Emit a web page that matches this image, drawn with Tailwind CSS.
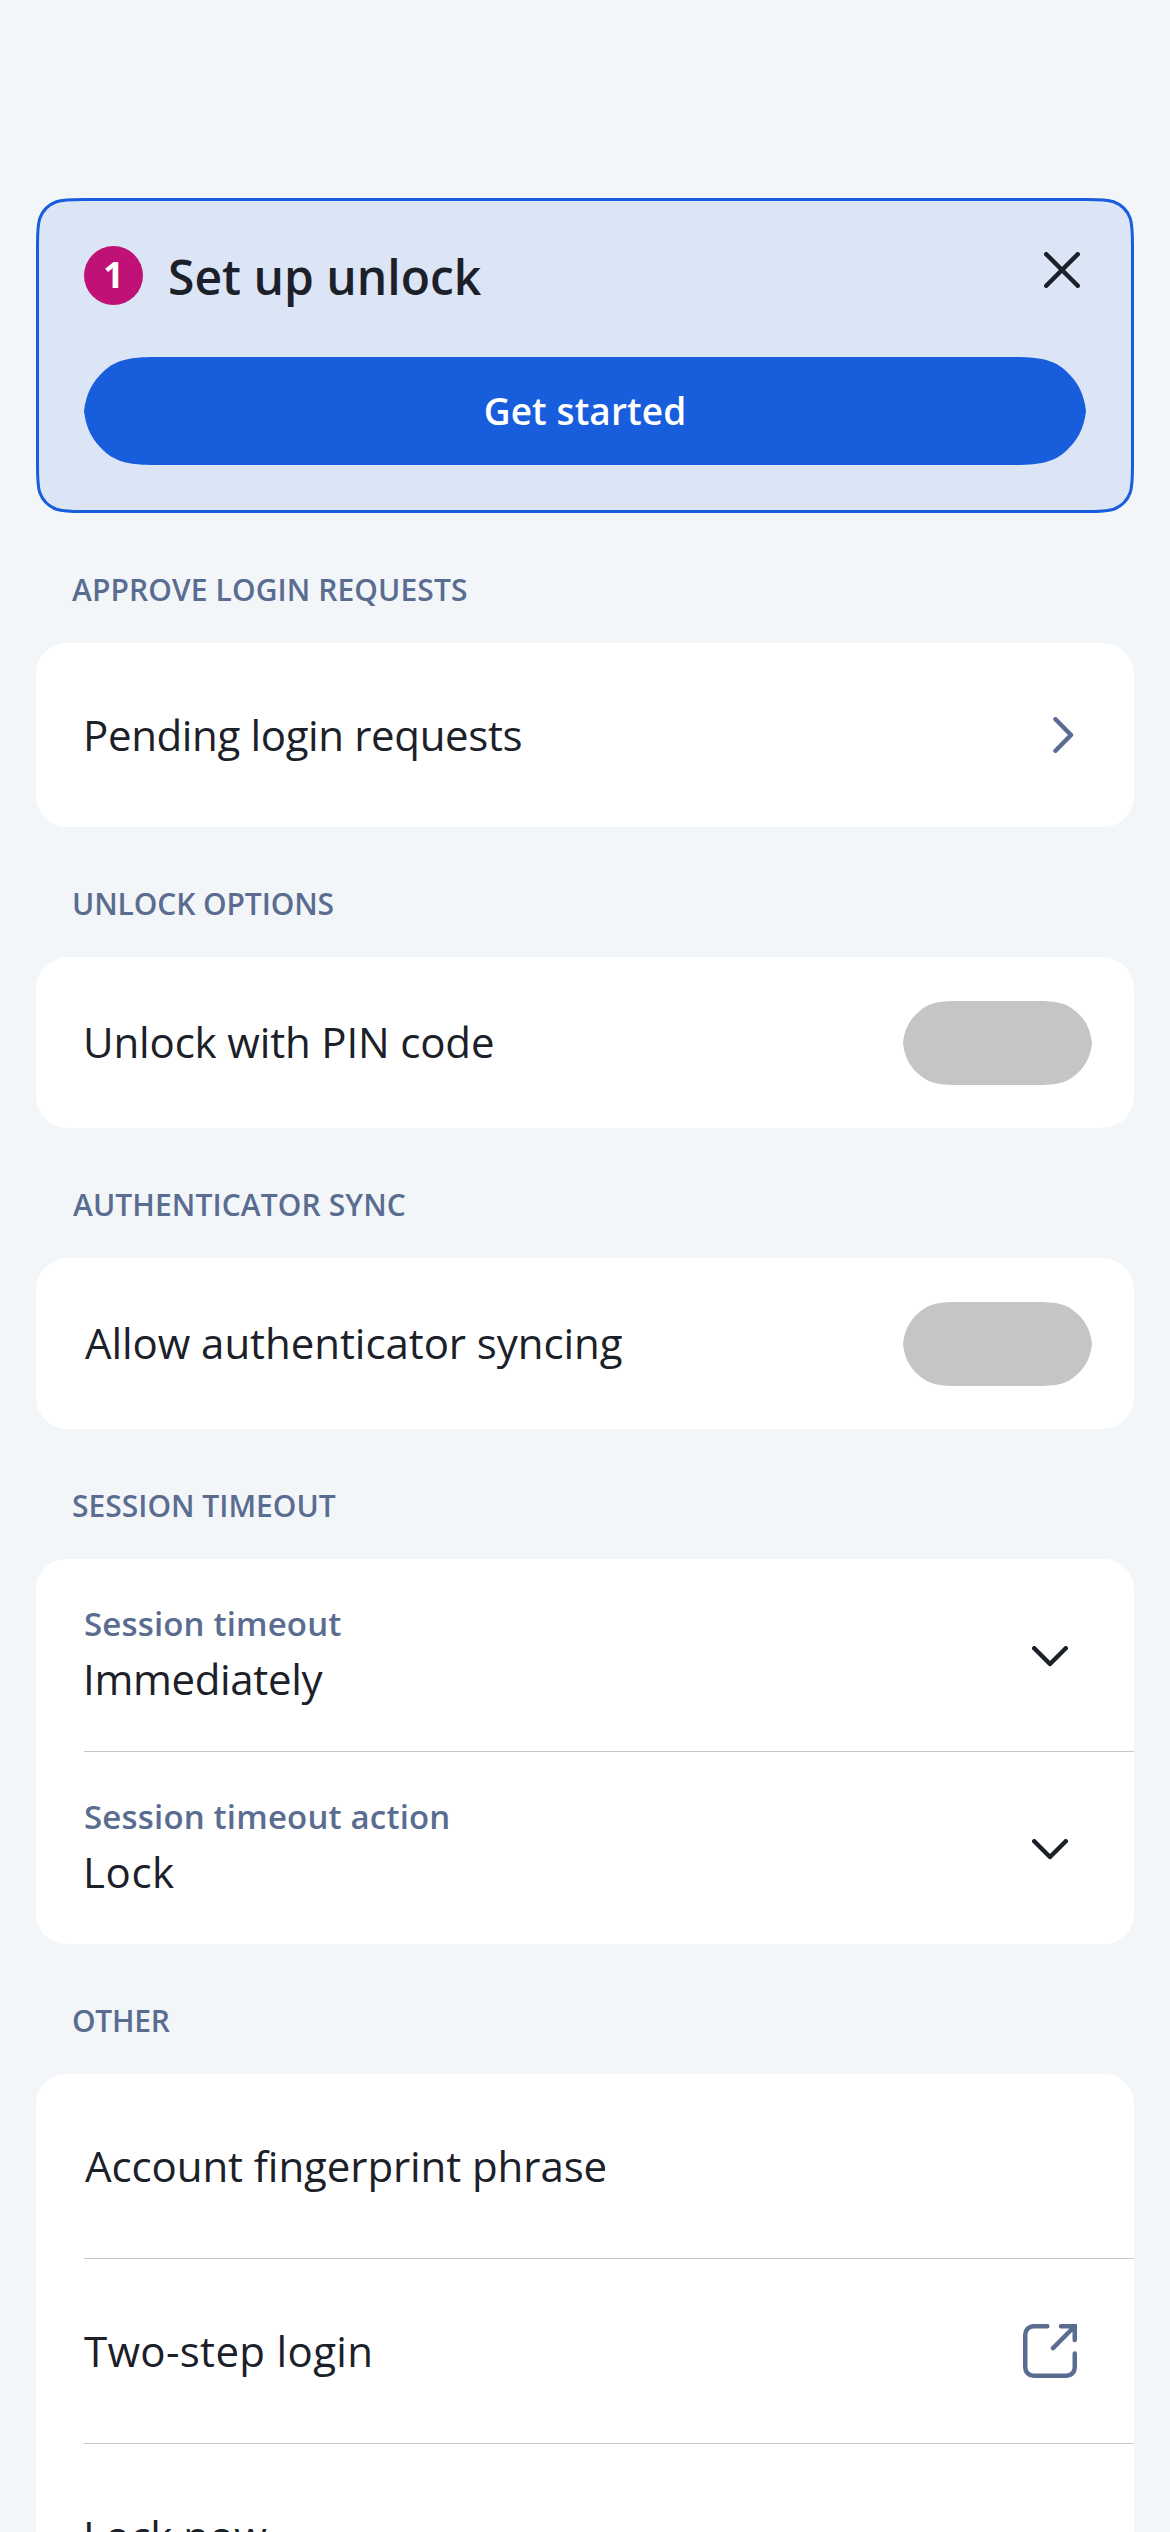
<!DOCTYPE html>
<html lang="en">
<head>
<meta charset="utf-8">
<title>Account security</title>
<script src="https://cdn.jsdelivr.net/npm/@tailwindcss/browser@4"></script>
</head>
<body class="h-[2532px] overflow-hidden bg-[#f3f6f9] font-['Open_Sans',sans-serif] text-[42px] text-[#1b2029]">
<main class="flex flex-col px-[36px] pt-[198px]">

  <!-- Action card -->
  <section class="relative isolate flex h-[315px] flex-col gap-[52px] px-[48px] pt-[48px]">
    <svg class="absolute inset-0 -z-10" width="1098" height="315" viewBox="0 0 1098 315" fill="#dbe5f6" stroke="#175ddc" stroke-width="3">
      <path d="M47.300 1.500H1050.700C1063.900 1.500 1070.500 1.500 1077.600 3.740C1085.300 6.560 1091.440 12.700 1094.260 20.400C1096.500 27.500 1096.500 34.100 1096.500 47.300V267.700C1096.500 280.900 1096.500 287.500 1094.260 294.600C1091.440 302.300 1085.300 308.440 1077.600 311.260C1070.500 313.500 1063.900 313.500 1050.700 313.500H47.300C34.100 313.500 27.500 313.500 20.400 311.260C12.700 308.440 6.560 302.300 3.740 294.600C1.500 287.500 1.500 280.900 1.500 267.700V47.300C1.500 34.100 1.500 27.500 3.740 20.400C6.560 12.700 12.700 6.560 20.400 3.740C27.500 1.500 34.100 1.500 47.300 1.500Z"/>
    </svg>
    <div class="flex h-[59px] items-center">
      <span class="flex size-[59px] items-center justify-center rounded-full bg-[#c01176] pb-[2px] text-[36px] leading-none font-bold text-white">1</span>
      <h2 class="mt-[2px] ml-[25px] text-[48px] leading-[59px] font-semibold">Set up unlock</h2>
      <svg class="mt-[6px] mr-[6px] ml-auto self-start" width="36" height="36" viewBox="0 0 36 36" fill="none" stroke="#1b2029" stroke-width="4.5" stroke-linecap="round"><path d="M2.25 2.25L33.75 33.75M33.75 2.25L2.25 33.75"/></svg>
    </div>
    <button class="relative isolate flex h-[108px] w-full items-center justify-center pb-[1px] text-[37px] font-semibold tracking-[0.1px] text-white">
      <svg class="absolute inset-0 -z-10" width="1002" height="108" viewBox="0 0 1002 108" fill="#175ddc">
        <path d="M72 0H930C957 0 970 3 982 14C994 25 1000 37 1002 54C1000 71 994 83 982 94C970 105 957 108 930 108H72C45 108 32 105 20 94C8 83 2 71 0 54C2 37 8 25 20 14C32 3 45 0 72 0Z"/>
      </svg>
      Get started
    </button>
  </section>

  <h3 class="flex h-[130px] items-center pt-[23px] pl-[36px] text-[30px] font-semibold tracking-[0.1px] text-[#5a6d91]">APPROVE LOGIN REQUESTS</h3>
  <section class="flex h-[184px] items-center justify-between rounded-[31px] bg-white pr-[60px] pb-[2px] pl-[47px]">
    <span class="tracking-[-0.36px]">Pending login requests</span>
    <svg class="mt-[2px]" width="21" height="36" viewBox="0 0 21 36" fill="none" stroke="#5a6d91" stroke-width="4.5" stroke-linecap="round" stroke-linejoin="round"><path d="M2.5 2.25L18 18L2.5 33.75"/></svg>
  </section>

  <h3 class="flex h-[130px] items-center pt-[23px] pl-[36px] text-[30px] font-semibold tracking-[-0.1px] text-[#5a6d91]">UNLOCK OPTIONS</h3>
  <section class="flex h-[171px] items-center justify-between rounded-[32px] bg-white pr-[42px] pl-[47px]">
    <span class="pb-[3px] tracking-[-0.15px]">Unlock with PIN code</span>
    <svg width="189" height="84" viewBox="0 0 189 84" fill="#c5c5c7">
      <path d="M56 0H133C154 0 164 2 173.500 11C183 19 187.500 29 189 42C187.500 55 183 65 173.500 73C164 82 154 84 133 84H56C35 84 25 82 15.500 73C6 65 1.500 55 0 42C1.500 29 6 19 15.500 11C25 2 35 0 56 0Z"/>
    </svg>
  </section>

  <h3 class="flex h-[130px] items-center pt-[23px] pl-[37px] text-[30px] font-semibold tracking-[0.1px] text-[#5a6d91]">AUTHENTICATOR SYNC</h3>
  <section class="flex h-[171px] items-center justify-between rounded-[32px] bg-white pr-[42px] pl-[49px]">
    <span class="pb-[3px] tracking-[-0.06px]">Allow authenticator syncing</span>
    <svg width="189" height="84" viewBox="0 0 189 84" fill="#c5c5c7">
      <path d="M56 0H133C154 0 164 2 173.500 11C183 19 187.500 29 189 42C187.500 55 183 65 173.500 73C164 82 154 84 133 84H56C35 84 25 82 15.500 73C6 65 1.500 55 0 42C1.500 29 6 19 15.500 11C25 2 35 0 56 0Z"/>
    </svg>
  </section>

  <h3 class="flex h-[130px] items-center pt-[23px] pl-[36px] text-[30px] font-semibold text-[#5a6d91]">SESSION TIMEOUT</h3>
  <section class="flex flex-col rounded-[30px] bg-white">
    <div class="flex h-[192px] justify-between pr-[66px] pl-[48px]">
      <div class="flex flex-col pt-[45px]">
        <span class="text-[33px] leading-[40px] font-semibold tracking-[0.16px] text-[#5a6d91]">Session timeout</span>
        <span class="-ml-px leading-[69px] tracking-[-0.34px]">Immediately</span>
      </div>
      <svg class="mt-[87px]" width="36" height="21" viewBox="0 0 36 21" fill="none" stroke="#1b2029" stroke-width="4.5" stroke-linecap="round" stroke-linejoin="round"><path d="M2.25 2.25L18 18L33.75 2.25"/></svg>
    </div>
    <div class="ml-[48px] h-px bg-[#c5c6c8]"></div>
    <div class="flex h-[192px] justify-between pr-[66px] pl-[48px]">
      <div class="flex flex-col pt-[45px]">
        <span class="text-[33px] leading-[40px] font-semibold tracking-[0.18px] text-[#5a6d91]">Session timeout action</span>
        <span class="-ml-px leading-[69px] tracking-[0.6px]">Lock</span>
      </div>
      <svg class="mt-[87px]" width="36" height="21" viewBox="0 0 36 21" fill="none" stroke="#1b2029" stroke-width="4.5" stroke-linecap="round" stroke-linejoin="round"><path d="M2.25 2.25L18 18L33.75 2.25"/></svg>
    </div>
  </section>

  <h3 class="flex h-[130px] items-center pt-[23px] pl-[36px] text-[30px] font-semibold tracking-[-0.3px] text-[#5a6d91]">OTHER</h3>
  <section class="flex flex-col rounded-t-[30px] bg-white">
    <div class="flex h-[184px] items-center pb-[2px] pl-[49px] tracking-[-0.08px]">Account fingerprint phrase</div>
    <div class="ml-[48px] h-px bg-[#c5c6c8]"></div>
    <div class="flex h-[184px] items-center justify-between pr-[57px] pl-[48px]">
      <span class="pb-[2px] tracking-[0.33px]">Two-step login</span>
      <svg width="54" height="54" viewBox="0 0 54 54" fill="none" stroke="#5a6d91" stroke-width="4.5" stroke-linecap="round"><path d="M24.250 2.250H10.500A8.250 8.250 0 0 0 2.250 10.500V43.500A8.250 8.250 0 0 0 10.500 51.750H43.500A8.250 8.250 0 0 0 51.750 43.500V29.500M38 2.250H51.750V16M51 3L30 24.200"/></svg>
    </div>
    <div class="ml-[48px] h-px bg-[#c5c6c8]"></div>
    <div class="flex h-[184px] items-center pb-[2px] pl-[47px]">Lock now</div>
  </section>
</main>
</body>
</html>
